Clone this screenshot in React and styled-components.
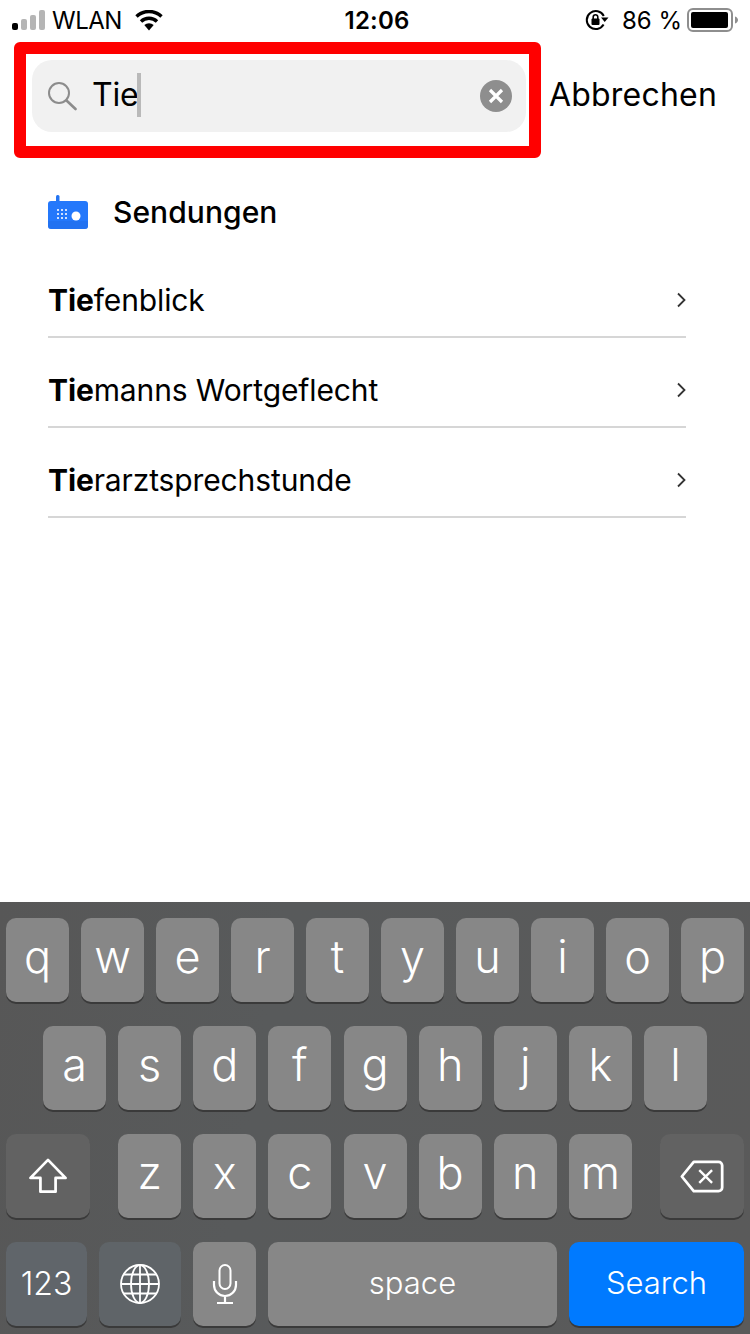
import React from 'react';
import styled, { createGlobalStyle } from 'styled-components';

const Global = createGlobalStyle`
  html, body { margin: 0; padding: 0; background: #fff; }
  * { box-sizing: border-box; }
  body { font-family: Inter, "Noto Sans", "Liberation Sans", sans-serif; color: #000; }
`;
const Page = styled.div`
  width: 750px; height: 1334px; display: flex; flex-direction: column; overflow: hidden; background: #fff;
`;
const StatusBar = styled.div`
  height: 42px; padding: 0 12px 2px 12px; display: grid; grid-template-columns: 1fr auto 1fr; align-items: center;
  font-size: 24px; letter-spacing: 0.2px;
`;
const StatusLeft = styled.div`display: flex; align-items: center;`;
const StatusRight = styled.div`display: flex; align-items: center; justify-content: flex-end;`;
const Carrier = styled.span`margin-left: 5px; margin-right: 13px; letter-spacing: -.5px; font-weight: 400;`;
const Clock = styled.span`font-weight: 600; font-size: 24px; margin-left: 4px;`;
const Percent = styled.span`margin-left: 13px; margin-right: 5px; font-weight: 400; letter-spacing: 0;`;
const SearchRow = styled.div`display: flex; align-items: center; padding-left: 14px;`;
const Highlight = styled.div`
  width: 527px; height: 116px; border: 12px solid #ff0000; border-radius: 6px; padding: 6px 3px 14px 6px; flex: none;
`;
const Field = styled.div`
  height: 72px; background: #f1f1f1; border-radius: 20px; padding: 0 14px 0 15px; display: flex; align-items: center;
`;
const Query = styled.span`font-size: 32px; margin-left: 15px; line-height: 44px; letter-spacing: -.2px; position: relative; top: -1px;`;
const Caret = styled.span`width: 4px; height: 44px; background: #b9b9b9; margin-left: -1px; flex: none; position: relative; top: -1px;`;
const Clear = styled.span`
  margin-left: auto; width: 32px; height: 32px; border-radius: 50%; background: #8e8e8e; display: flex; align-items: center; justify-content: center;
`;
const Cancel = styled.span`font-size: 32px; margin-left: 8px; letter-spacing: .2px; position: relative; top: -6px;`;
const Results = styled.div`padding: 0 64px 0 48px;`;
const SectionHead = styled.div`height: 90px; padding-top: 18px; display: flex; align-items: center;`;
const SectionTitle = styled.span`font-size: 30px; font-weight: 450; margin: 0 0 0 25px; letter-spacing: .05px;`;
const Row = styled.div`
  height: 90px; padding: 16px 0 0 0; border-bottom: 2px solid #d6d6d6; display: flex; align-items: center; justify-content: space-between;
  font-size: 30px; letter-spacing: -.12px;
`;
const Strong = styled.b`font-weight: 700;`;
const Spacer = styled.div`flex: 1;`;
const Keyboard = styled.div`
  height: 432px; flex: none; padding: 16px 6px 8px; display: flex; flex-direction: column; gap: 24px;
  background: linear-gradient(100deg, #575757 0%, #585a5b 35%, #5a5a5a 100%);
`;
const KeyRow = styled.div`display: flex; gap: ${p => p.$gap || 12}px; height: 84px; padding-left: ${p => p.$inset || 0}px;`;
const Key = styled.div`
  width: ${p => p.$w || 63}px; height: 84px; flex: none; border-radius: 10px;
  background: ${p => p.$bg || '#878787'}; box-shadow: 0 2px 0 #3a3a3a;
  color: #fff; display: flex; align-items: center; justify-content: center;
  font-size: ${p => p.$size || 45}px; font-weight: 300; line-height: 1; padding-bottom: ${p => p.$pb ?? 8}px;
  margin-left: ${p => p.$ml || 0}px;
`;

const Signal = () => (
  <svg width="35" height="20" viewBox="0 0 35 20">
    <rect x="0" y="13" width="6" height="7" rx="2" fill="#000" />
    <rect x="9" y="9" width="6" height="11" rx="2" fill="#b5b5b5" />
    <rect x="18" y="5" width="6" height="15" rx="2" fill="#b5b5b5" />
    <rect x="27" y="0" width="6" height="20" rx="2" fill="#b5b5b5" />
  </svg>
);
const Wifi = () => (
  <svg width="28" height="21" viewBox="0 0 28 21">
    <path d="M1.5 6.5A18 18 0 0 1 26.5 6.5" fill="none" stroke="#000" strokeWidth="3.4" />
    <path d="M6 11.5A11.5 11.5 0 0 1 22 11.5" fill="none" stroke="#000" strokeWidth="3.4" />
    <path d="M9.3 15a7 7 0 0 1 9.4 0L14 20.5Z" fill="#000" />
  </svg>
);
const Rotation = () => (
  <svg width="24" height="22" viewBox="0 0 24 22">
    <path d="M18.6 15.5A9 9 0 1 1 18.8 7" fill="none" stroke="#000" strokeWidth="2" />
    <path d="M16 8.5 23.5 8.5 19.7 13Z" fill="#000" />
    <rect x="6.5" y="9.5" width="8" height="6.5" rx="1" fill="#000" />
    <path d="M8.2 10V8a2.3 2.3 0 0 1 4.6 0v2" fill="none" stroke="#000" strokeWidth="1.6" />
  </svg>
);
const Battery = () => (
  <svg width="51" height="24" viewBox="0 0 51 24">
    <rect x="1" y="1" width="44" height="22" rx="5" fill="none" stroke="#8e8e8e" strokeWidth="2" />
    <rect x="4" y="4" width="37" height="16" rx="2" fill="#000" />
    <path d="M48 8.5c2 .6 3 2 3 3.5s-1 2.900-3 3.500Z" fill="#8e8e8e" />
  </svg>
);
const SearchGlyph = () => (
  <svg width="30" height="30" viewBox="0 0 30 30">
    <circle cx="12" cy="12" r="10" fill="none" stroke="#8c8c8c" strokeWidth="2" />
    <path d="M19.500 19.500 28.500 28" stroke="#8c8c8c" strokeWidth="2.600" strokeLinecap="round" />
  </svg>
);
const RadioIcon = () => (
  <svg width="40" height="36" viewBox="0 0 40 36">
    <rect x="8" y="1" width="3.500" height="8" rx="1.500" fill="#2374f2" />
    <rect x="0" y="7" width="40" height="28" rx="3" fill="#2478fb" />
    <path d="M0 27h40v5a3 3 0 0 1-3 3H3a3 3 0 0 1-3-3Z" fill="#1f6be8" opacity=".5" />
    <circle cx="28" cy="22" r="4.500" fill="#fff" />
    {[0, 1, 2].map(r => [0, 1, 2].map(c => (
      <rect key={`${r}${c}`} x={9 + c * 4} y={15 + r * 4} width="2" height="2" fill="#cfe0ff" />
    )))}
  </svg>
);
const Chevron = () => (
  <svg width="10" height="16" viewBox="0 0 10 16">
    <path d="M2 1.500 8.500 8 2 14.500" fill="none" stroke="#333" strokeWidth="1.800" />
  </svg>
);
const Shift = () => (
  <svg width="40" height="36" viewBox="0 0 42 38">
    <path d="M21 2 39.500 21 29 21 29 35.500 13 35.500 13 21 2.500 21Z" fill="none" stroke="#fff" strokeWidth="2.900" strokeLinejoin="round" />
  </svg>
);
const Backspace = () => (
  <svg width="46" height="33" viewBox="0 0 48 36">
    <path d="M15 2H42a4 4 0 0 1 4 4V30a4 4 0 0 1-4 4H15L2 18Z" fill="none" stroke="#fff" strokeWidth="3" strokeLinejoin="round" />
    <path d="M21 11 35 25M35 11 21 25" stroke="#fff" strokeWidth="2.600" />
  </svg>
);
const Globe = () => (
  <svg width="40" height="40" viewBox="0 0 40 40" fill="none" stroke="#fff" strokeWidth="1.800">
    <circle cx="20" cy="20" r="19" />
    <ellipse cx="20" cy="20" rx="9" ry="19" />
    <path d="M20 1v38M1 20h38M4 10.500h32M4 29.500h32" />
  </svg>
);
const Mic = () => (
  <svg width="26" height="40" viewBox="0 0 26 40" fill="none" stroke="#fff" strokeWidth="2">
    <rect x="7.500" y="1" width="11" height="24" rx="5.500" />
    <path d="M2 17v4a11 11 0 0 0 22 0v-4M13 32v7M5 39h16" strokeWidth="2.200" />
  </svg>
);

const rows = [
  ['Tie', 'fenblick'],
  ['Tie', 'manns Wortgeflecht'],
  ['Tie', 'rarztsprechstunde'],
];
const LetterRow = ({ keys, inset, gap }) => (
  <KeyRow $inset={inset} $gap={gap}>{keys.split('').map(k => <Key key={k}>{k}</Key>)}</KeyRow>
);

export default function App() {
  return (
    <Page>
      <Global />
      <StatusBar>
        <StatusLeft><Signal /><Carrier>WLAN</Carrier><Wifi /></StatusLeft>
        <Clock>12:06</Clock>
        <StatusRight><Rotation /><Percent>86 %</Percent><Battery /></StatusRight>
      </StatusBar>
      <SearchRow>
        <Highlight>
          <Field>
            <SearchGlyph />
            <Query>Tie</Query>
            <Caret />
            <Clear>
              <svg width="18" height="18" viewBox="0 0 18 18"><path d="M3 3 15 15M15 3 3 15" stroke="#fff" strokeWidth="3.200" /></svg>
            </Clear>
          </Field>
        </Highlight>
        <Cancel>Abbrechen</Cancel>
      </SearchRow>
      <Results>
        <SectionHead><RadioIcon /><SectionTitle>Sendungen</SectionTitle></SectionHead>
        {rows.map(([b, r]) => (
          <Row key={r}><span><Strong>{b}</Strong>{r}</span><Chevron /></Row>
        ))}
      </Results>
      <Spacer />
      <Keyboard>
        <LetterRow keys="qwertyuiop" />
        <LetterRow keys="asdfghjkl" inset={37} gap={12.125} />
        <KeyRow $gap={12.125}>
          <Key $w={84} $bg="#626262" $pb={0}><Shift /></Key>
          <Key $ml={16}>z</Key><Key>x</Key><Key>c</Key><Key>v</Key><Key>b</Key><Key>n</Key><Key>m</Key>
          <Key $w={84} $bg="#626262" $ml={16} $pb={0}><Backspace /></Key>
        </KeyRow>
        <KeyRow>
          <Key $w={81} $bg="#60656a" $size={32} $pb={0}>123</Key>
          <Key $w={82} $bg="#5f6468" $pb={0}><Globe /></Key>
          <Key $pb={0}><Mic /></Key>
          <Key $w={289} $size={31} $pb={3}>space</Key>
          <Key $w={175} $bg="#007aff" $size={31} $pb={3}>Search</Key>
        </KeyRow>
      </Keyboard>
    </Page>
  );
}
